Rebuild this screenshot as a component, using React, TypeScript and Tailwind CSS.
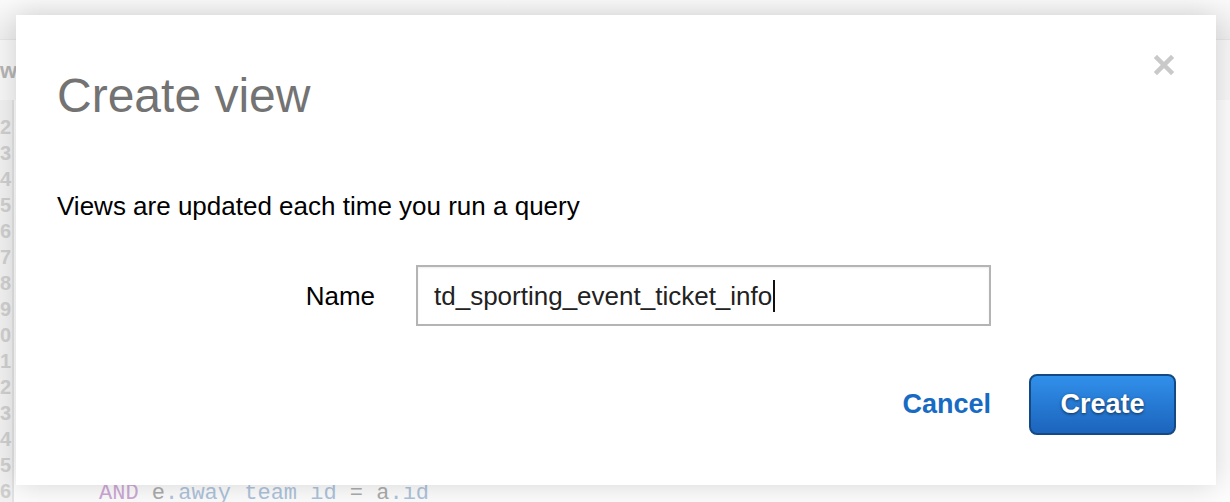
import React from 'react'

const SANS = "font-['Liberation_Sans',Arial,Helvetica,sans-serif]"

function CloseIcon() {
  return (
    <svg width="20" height="20" viewBox="0 0 20 20" className="block">
      <path d="M3 3 L17 17 M17 3 L3 17" stroke="#c9c9c9" strokeWidth="4.5" strokeLinecap="square" />
    </svg>
  )
}

// faded editor behind the modal
function Backdrop() {
  const lines = Array.from({ length: 15 }, (_, i) => String((i + 2) % 10))
  return (
    <div className="flex flex-col h-full">
      <div className="h-10 bg-gradient-to-b from-[#fafafa] to-[#efefef] border-b border-[#e6e6e6]" />
      <div className="h-[60px] bg-[#f7f7f7] flex items-center">
        <span className={`${SANS} text-[22px] font-bold text-[#b5b5b5]`}>w</span>
      </div>
      <div className="flex flex-1 min-h-0">
        <div className="w-[14px] bg-[#f1f1f1] border-r-2 border-[#e3e3e3] overflow-hidden flex flex-col items-start pt-[14px]">
          {lines.map((n, i) => (
            <span key={i} className={`${SANS} text-[20px] font-bold leading-[26px] text-[#cfcfcf]`}>{n}</span>
          ))}
        </div>
        <div className="flex-1 bg-[#fdfdfd] flex flex-col justify-end pl-[85px]">
          <div className="font-['Liberation_Mono',monospace] text-[22px] leading-[24px] -mb-[4px] whitespace-pre">
            <span className="text-[#cfa8d6]">AND</span>
            <span className="text-[#acacac]"> e</span>
            <span className="text-[#adc4dc]">.away team id</span>
            <span className="text-[#acacac]"> = a</span>
            <span className="text-[#adc4dc]">.id</span>
          </div>
        </div>
      </div>
    </div>
  )
}

export default function App() {
  return (
    <div className="relative w-[1230px] h-[502px] overflow-hidden bg-white">
      <Backdrop />

      {/* Create view modal */}
      <div
        className={`${SANS} absolute left-4 top-[15px] w-[1200px] h-[470px] bg-white shadow-[0_0_28px_rgba(0,0,0,0.16)] pt-[57px] pl-[41px] pr-[40px] flex flex-col`}
      >
        <button className="absolute right-[42px] top-[40px] cursor-pointer">
          <CloseIcon />
        </button>

        <h2 className="text-[48px] leading-[48px] text-[#737373] font-normal">Create view</h2>

        <p className="mt-[73px] text-[26px] leading-[26px] text-black">
          Views are updated each time you run a query
        </p>

        <div className="mt-[46px] flex items-center">
          <label className="w-[318px] text-right text-[26px] leading-[26px] text-black">Name</label>
          <div className="ml-[41px] w-[575px] h-[61px] border-2 border-[#b4b4b4] shadow-[inset_0_1px_2px_rgba(0,0,0,0.08)] flex items-center pl-[16px]">
            <span className="text-[26px] leading-[30px] text-[#222]">td_sporting_event_ticket_info</span>
            <span className="w-[2px] h-[32px] bg-[#111] ml-[1px]" />
          </div>
        </div>

        <div className="mt-[48px] flex items-center justify-end">
          <button className="text-[27px] font-bold text-[#176bc3] cursor-pointer">Cancel</button>
          <button className="ml-[38px] w-[147px] h-[61px] rounded-[8px] border-2 border-[#134a86] bg-gradient-to-b from-[#3190ea] to-[#1c64bd] text-white text-[27px] font-bold [text-shadow:0_1px_3px_rgba(0,0,0,0.6)] cursor-pointer">
            Create
          </button>
        </div>
      </div>
    </div>
  )
}
